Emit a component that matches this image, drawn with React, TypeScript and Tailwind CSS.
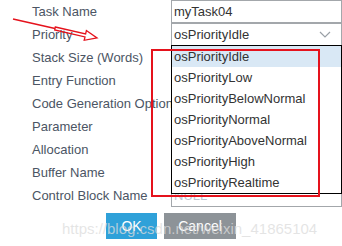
import React from 'react';

const labels = [
    'Task Name',
    'Priority',
    'Stack Size (Words)',
    'Entry Function',
    'Code Generation Option',
    'Parameter',
    'Allocation',
    'Buffer Name',
    'Control Block Name',
];

const priorities = [
    'osPriorityIdle',
    'osPriorityLow',
    'osPriorityBelowNormal',
    'osPriorityNormal',
    'osPriorityAboveNormal',
    'osPriorityHigh',
    'osPriorityRealtime',
];

const values: Record<number, string> = {
    0: 'myTask04',
    1: 'osPriorityIdle',
};

export default function App() {
    return (
        <div className="relative w-[342px] h-[246px] overflow-hidden bg-white font-['Liberation_Sans',Arial,sans-serif] text-[13px]">
            {/* form rows */}
            <div className="grid grid-cols-[171px_171px]">
                {labels.map((label, i) => (
                    <React.Fragment key={label}>
                        <div className="h-[23px] pl-8 flex items-center whitespace-nowrap overflow-hidden text-[#4b5564]">
                            {label}
                        </div>
                        <div className="h-[23px] border border-[#a3a7ab] flex items-center justify-between pl-[2px] pr-2 text-[#333]">
                            {values[i] ? (
                                <span>{values[i]}</span>
                            ) : (
                                <span className="text-[#bcc6d2]">NULL</span>
                            )}
                            {i === 1 && (
                                <svg width="12" height="7" viewBox="0 0 12 7" className="mr-[2px]">
                                    <path d="M1 1 L6 6 L11 1" fill="none" stroke="#9aa0a6" strokeWidth="1.2" />
                                </svg>
                            )}
                        </div>
                    </React.Fragment>
                ))}
            </div>

            {/* buttons */}
            <div className="mt-[6px] flex justify-center gap-[7px]">
                <button className="w-[51px] h-[26px] bg-[#2fa1d9] text-white text-[14px]">OK</button>
                <button className="w-[72px] h-[26px] bg-[#8d9398] text-white text-[14px]">Cancel</button>
            </div>

            {/* open dropdown */}
            <div className="absolute left-[171px] top-[45px] w-[171px] border border-black bg-white">
                {priorities.map((p, i) => (
                    <div
                        key={p}
                        className={`h-[21px] flex items-center pl-[2px] text-[#333] ${i === 0 ? 'bg-[#d9e8f5]' : ''}`}
                    >
                        {p}
                    </div>
                ))}
            </div>

            {/* red annotation box */}
            <div className="absolute left-[151px] top-[49px] w-[169px] h-[148px] border-2 border-[#e5121c]" />

            {/* red arrow */}
            <svg className="absolute left-0 top-0" width="110" height="50" viewBox="0 0 110 50">
                <line x1="13" y1="19" x2="55" y2="28.5" stroke="#e5121c" strokeWidth="1.5" />
                <polygon
                    points="55.3,27 85.6,33.9 86.4,30.5 97,38 84.2,40.3 85,36.9 54.7,30"
                    fill="none"
                    stroke="#e5121c"
                    strokeWidth="1.3"
                    strokeLinejoin="miter"
                />
            </svg>

            {/* watermark */}
            <div className="absolute left-[62px] top-[218px] text-[15px] text-[rgba(220,220,220,0.75)] whitespace-nowrap pointer-events-none">
                https://blog.csdn.net/weixin_41865104
            </div>
        </div>
    );
}
